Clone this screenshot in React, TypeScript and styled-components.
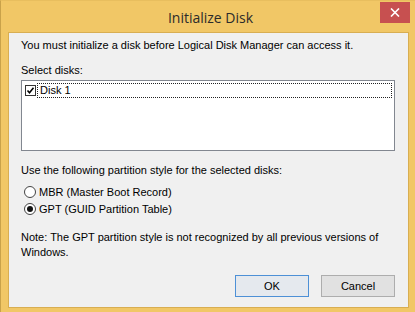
import * as React from "react";
import styled, { createGlobalStyle } from "styled-components";

const GlobalStyle = createGlobalStyle`
  html, body {
    margin: 0;
    padding: 0;
    background: #f0f0f0;
  }
`;

const Frame = styled.div`
  width: 415px;
  height: 312px;
  box-sizing: border-box;
  background: #f1c766;
  border-left: 1px solid #c9a24a;
  border-top: 1px solid #e8be5e;
  display: flex;
  flex-direction: column;
  padding: 0 6px 4px 7px;
  font-family: "Liberation Sans", Arial, sans-serif;
  font-size: 11px;
  color: #000;
`;

const TitleBar = styled.div`
  height: 31px;
  display: grid;
  grid-template-columns: 1fr auto 1fr;
  align-items: start;
`;

const TitleText = styled.div`
  grid-column: 2;
  font-family: "Open Sans", "Noto Sans", sans-serif;
  font-size: 14px;
  color: #2b2b2b;
  line-height: 20px;
  margin-top: 7px;
  margin-left: 4px;
`;

const CloseButton = styled.div`
  grid-column: 3;
  justify-self: end;
  width: 30px;
  height: 21px;
  margin-top: 1px;
  margin-right: -1px;
  background: #c75050;
  display: flex;
  align-items: center;
  justify-content: center;
`;

const Content = styled.div`
  flex: 1;
  background: #f0f0f0;
  border: 1px solid #d8ae52;
  padding: 6px 13px 0 12px;
  display: flex;
  flex-direction: column;
`;

const Text = styled.div<{ $top?: number }>`
  line-height: 13px;
  margin-top: ${(p) => p.$top ?? 0}px;
  white-space: nowrap;
`;

const Note = styled.div`
  line-height: 15px;
  margin-top: 15px;
`;

const ListBox = styled.div`
  margin-top: 3px;
  height: 67px;
  background: #fff;
  border: 1px solid #828790;
  padding: 2px 2px 0 2px;
`;

const ListItem = styled.div`
  display: flex;
  align-items: center;
  height: 15px;
`;

const CheckBox = styled.div`
  width: 11px;
  height: 11px;
  box-sizing: border-box;
  border: 1px solid #333;
  background: #fff;
  margin: 0 1px 0 1px;
  display: flex;
  align-items: center;
  justify-content: center;
`;

const ItemLabel = styled.div`
  flex: 1;
  height: 15px;
  box-sizing: border-box;
  border: 1px dotted #222;
  padding-left: 2px;
  line-height: 13px;
`;

const RadioList = styled.div`
  margin-top: 8px;
  display: flex;
  flex-direction: column;
  gap: 4px;
`;

const RadioRow = styled.div`
  display: flex;
  align-items: center;
  height: 13px;
  padding-left: 3px;
  gap: 3px;
`;

const Radio = styled.div<{ $checked?: boolean }>`
  width: 12px;
  height: 12px;
  box-sizing: border-box;
  border-radius: 50%;
  border: 1px solid #444;
  background: #fff;
  display: flex;
  align-items: center;
  justify-content: center;

  &::after {
    content: "";
    display: ${(p) => (p.$checked ? "block" : "none")};
    width: 6px;
    height: 6px;
    border-radius: 50%;
    background: #111;
  }
`;

const Buttons = styled.div`
  margin-top: auto;
  margin-bottom: 10px;
  display: flex;
  justify-content: flex-end;
  gap: 12px;
  margin-right: 0;
`;

const Button = styled.div<{ $default?: boolean }>`
  width: 74px;
  height: 22px;
  box-sizing: border-box;
  border: 1px solid ${(p) => (p.$default ? "#4d90d6" : "#adadad")};
  background: ${(p) => (p.$default ? "#e5e9ee" : "#e1e1e1")};
  display: flex;
  align-items: center;
  justify-content: center;
  font-size: 11px;
`;

const App = () => {
  return (
    <>
      <GlobalStyle />
      <Frame>
        <TitleBar>
          <TitleText>Initialize Disk</TitleText>
          <CloseButton>
            <svg width="10" height="9" viewBox="0 0 10 9">
              <path d="M1 0.5 L9 8.5 M9 0.5 L1 8.5" stroke="#fff" strokeWidth="1.6" />
            </svg>
          </CloseButton>
        </TitleBar>
        <Content>
          <Text>You must initialize a disk before Logical Disk Manager can access it.</Text>
          <Text $top={12}>Select disks:</Text>
          <ListBox>
            <ListItem>
              <CheckBox>
                <svg width="9" height="9" viewBox="0 0 9 9">
                  <path d="M1.5 4.5 L3.5 6.8 L7.5 1.8" stroke="#000" strokeWidth="1.6" fill="none" />
                </svg>
              </CheckBox>
              <ItemLabel>Disk 1</ItemLabel>
            </ListItem>
          </ListBox>
          <Text $top={13}>Use the following partition style for the selected disks:</Text>
          <RadioList>
            <RadioRow>
              <Radio />
              <span>MBR (Master Boot Record)</span>
            </RadioRow>
            <RadioRow>
              <Radio $checked />
              <span>GPT (GUID Partition Table)</span>
            </RadioRow>
          </RadioList>
          <Note>
            Note: The GPT partition style is not recognized by all previous versions of
            <br />
            Windows.
          </Note>
          <Buttons>
            <Button $default>OK</Button>
            <Button>Cancel</Button>
          </Buttons>
        </Content>
      </Frame>
    </>
  );
};

export default App;
